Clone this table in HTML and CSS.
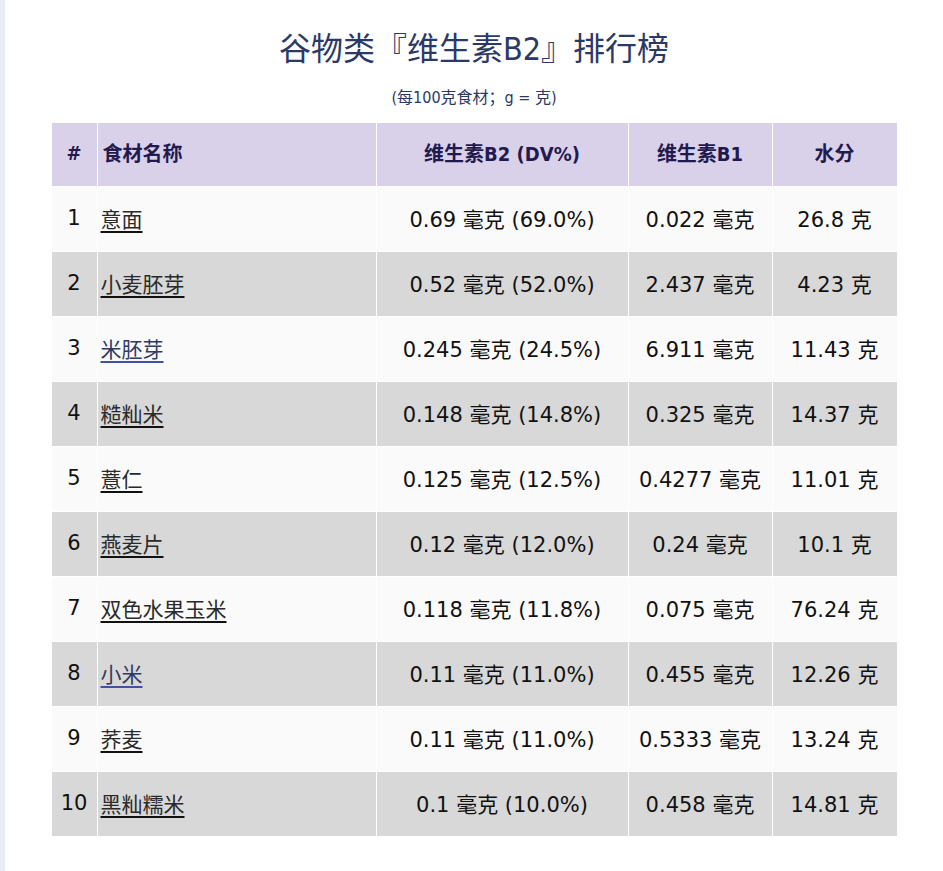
FILE: index.html
```html
<!DOCTYPE html>
<html lang="zh">
<head>
<meta charset="utf-8">
<title>谷物类『维生素B2』排行榜</title>
<link rel="stylesheet" href="styles.css">
</head>
<body>
<div class="page">
  <h1 class="title">谷物类『维生素B2』排行榜</h1>
  <p class="subtitle">(每100克食材；g = 克)</p>
  <table class="rank">
    <thead>
      <tr>
        <th class="c-num">#</th>
        <th class="c-name">食材名称</th>
        <th class="c-b2">维生素B2 (DV%)</th>
        <th class="c-b1">维生素B1</th>
        <th class="c-water">水分</th>
      </tr>
    </thead>
    <tbody>
      <tr><td class="c-num">1</td><td class="c-name"><a href="#">意面</a></td><td>0.69 毫克 (69.0%)</td><td>0.022 毫克</td><td>26.8 克</td></tr>
      <tr><td class="c-num">2</td><td class="c-name"><a href="#">小麦胚芽</a></td><td>0.52 毫克 (52.0%)</td><td>2.437 毫克</td><td>4.23 克</td></tr>
      <tr><td class="c-num">3</td><td class="c-name"><a href="#" class="fresh">米胚芽</a></td><td>0.245 毫克 (24.5%)</td><td>6.911 毫克</td><td>11.43 克</td></tr>
      <tr><td class="c-num">4</td><td class="c-name"><a href="#">糙籼米</a></td><td>0.148 毫克 (14.8%)</td><td>0.325 毫克</td><td>14.37 克</td></tr>
      <tr><td class="c-num">5</td><td class="c-name"><a href="#">薏仁</a></td><td>0.125 毫克 (12.5%)</td><td>0.4277 毫克</td><td>11.01 克</td></tr>
      <tr><td class="c-num">6</td><td class="c-name"><a href="#">燕麦片</a></td><td>0.12 毫克 (12.0%)</td><td>0.24 毫克</td><td>10.1 克</td></tr>
      <tr><td class="c-num">7</td><td class="c-name"><a href="#">双色水果玉米</a></td><td>0.118 毫克 (11.8%)</td><td>0.075 毫克</td><td>76.24 克</td></tr>
      <tr><td class="c-num">8</td><td class="c-name"><a href="#" class="fresh">小米</a></td><td>0.11 毫克 (11.0%)</td><td>0.455 毫克</td><td>12.26 克</td></tr>
      <tr><td class="c-num">9</td><td class="c-name"><a href="#">荞麦</a></td><td>0.11 毫克 (11.0%)</td><td>0.5333 毫克</td><td>13.24 克</td></tr>
      <tr><td class="c-num">10</td><td class="c-name"><a href="#">黑籼糯米</a></td><td>0.1 毫克 (10.0%)</td><td>0.458 毫克</td><td>14.81 克</td></tr>
    </tbody>
  </table>
</div>
</body>
</html>
```
FILE: styles.css
```css
html, body {
  margin: 0;
  padding: 0;
  background: #ffffff;
}
body {
  font-family: "DejaVu Sans", "Noto Sans CJK SC", sans-serif;
  color: #111111;
}
.page {
  border-left: 5px solid #e8eaf4;
  min-height: 871px;
  box-sizing: border-box;
  padding-top: 27px;
}
.title {
  margin: 0;
  text-align: center;
  font-family: "DejaVu Sans Condensed", "Noto Sans CJK SC", sans-serif;
  font-weight: normal;
  font-size: 32px;
  line-height: 44px;
  color: #2b3966;
}
.subtitle {
  margin: 16px 0 0;
  text-align: center;
  font-family: "DejaVu Sans Condensed", "Noto Sans CJK SC", sans-serif;
  font-size: 16px;
  line-height: 22px;
  color: #2b3966;
}
.rank {
  margin: 13px auto 0;
  width: 847px;
  border-collapse: collapse;
  table-layout: fixed;
  font-size: 21px;
}
.rank th, .rank td {
  border: 1px solid #ffffff;
  text-align: center;
  vertical-align: middle;
  padding: 0 3px;
}
.rank th {
  height: 59px;
  background: #d9d1e9;
  color: #221a4f;
  font-family: "DejaVu Sans Condensed", "Noto Sans CJK SC", sans-serif;
  font-weight: 600;
  font-size: 20px;
  padding-bottom: 4px;
}
.rank td {
  height: 62px;
  padding-bottom: 2px;
}
.rank tbody tr:nth-child(odd) td { background: #fafafa; }
.rank tbody tr:nth-child(even) td { background: #d8d8d8; }
.rank .c-num { width: 39px; }
.rank .c-name { width: 270px; text-align: left; }
.rank .c-b2 { width: 245px; }
.rank .c-b1 { width: 137px; }
.rank th.c-name { padding-left: 5px; }
.rank a {
  color: #2a2a2a;
  text-decoration: underline;
  text-decoration-thickness: 2px;
  text-underline-offset: 4px;
  text-decoration-color: #111111;
}
.rank a.fresh {
  color: #2f3a66;
  text-decoration-color: #3f52a8;
}
```
